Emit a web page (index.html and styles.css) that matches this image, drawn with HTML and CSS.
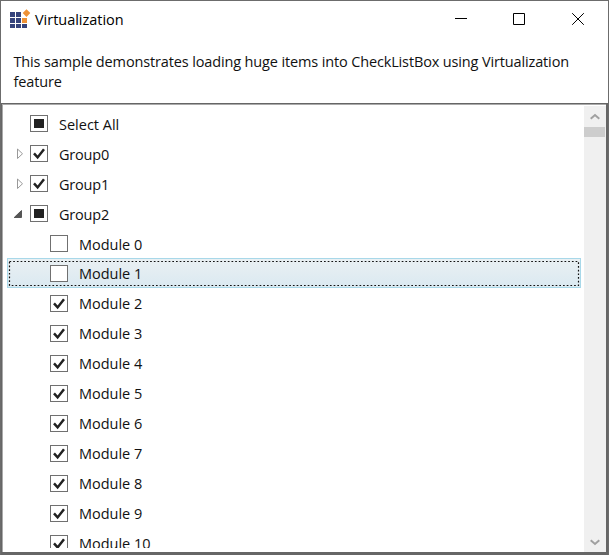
FILE: index.html
```
<!DOCTYPE html>
<html lang="en">
<head>
<meta charset="utf-8">
<title>Virtualization</title>
<link rel="stylesheet" href="styles.css">
</head>
<body>
<div class="window">
  <header class="titlebar">
    <svg class="logo" width="21" height="20" viewBox="0 0 21 20"><path fill="#35437c" d="M0 2h5v5H0zM6 2h5v5H6zM0 8h5v5H0zM6 8h5v5H6zM0 14h5v4H0zM6 14h5v4H6zM12 14h5v4h-5z"/><path fill="#ef9236" d="M12 8h5v5h-5zM16.5-.7l3.8 3.8-3.8 3.8-3.8-3.8z"/></svg>
    <span class="title">Virtualization</span>
    <div class="controls">
      <svg width="12" height="12" viewBox="0 0 12 12"><path d="M0 5.5h12"/></svg>
      <svg width="12" height="12" viewBox="0 0 12 12"><path d="M.5.5h11v11H.5z"/></svg>
      <svg width="12" height="12" viewBox="0 0 12 12"><path d="M.2.2l11.6 11.6M11.8.2L.2 11.8"/></svg>
    </div>
  </header>
  <p class="intro">This sample demonstrates loading huge items into CheckListBox using Virtualization<br>feature</p>
  <main class="list">
    <div class="rows" id="rows"></div>
    <div class="scrollbar">
      <svg width="10" height="7" viewBox="0 0 10 7"><path d="M.7 5.7L5 2l4.3 3.7"/></svg>
      <div class="track"><div class="thumb"></div></div>
      <svg width="10" height="7" viewBox="0 0 10 7"><path d="M.7 1.3L5 5l4.3-3.7"/></svg>
    </div>
  </main>
</div>
<script src="script.js"></script>
</body>
</html>
```
FILE: styles.css
```
* { box-sizing: border-box; }
body { margin: 0; background: #fff; color: #111; font-family: "Open Sans", "Noto Sans", sans-serif; font-size: 14.5px; }
.window { width: 609px; height: 555px; border: 1px solid #6c6c6c; border-bottom: 0; display: flex; flex-direction: column; overflow: hidden; }
.titlebar { height: 36px; flex: none; display: flex; align-items: center; padding-left: 9px; }
.logo { margin-top: 1px; overflow: visible; }
.title { margin: 2px 0 0 4px; letter-spacing: -.02px; line-height: 20px; color: #000; }
.controls { margin: 0 24px 0 auto; display: flex; gap: 46px; }
.controls svg { fill: none; stroke: #000; stroke-width: 1; }
.controls svg:last-child { margin-left: 1px; }
.intro { margin: 0; height: 66px; flex: none; padding: 15px 0 0 12.5px; line-height: 20px; white-space: nowrap; letter-spacing: -.14px; }
.list { flex: 1; display: flex; margin: 0 -1px; border: solid #666; border-width: 1px 3px 3px 2px; box-shadow: inset 1px 1px #aaa; padding: 2px 0 0 1px; min-height: 0; }
.rows { flex: 1; height: 442px; overflow: hidden; padding: 2px 0 0 4px; }
.row { position: relative; height: 30px; width: 574px; display: flex; align-items: center; padding-left: 6px; }
.row.child { padding-left: 43px; }
.label { margin: 3px 0 0 11px; line-height: 20px; letter-spacing: -.2px; white-space: nowrap; }
.row:first-child .label { letter-spacing: 0; }
.child .label { margin-top: 1px; letter-spacing: -.03px; }
.row:nth-child(5) .label { margin-top: 3px; }
.arrow { width: 10px; height: 12px; margin: 2px 7px 0 0; flex: none; }
.box { width: 18px; height: 17px; border: 1px solid #707070; background: #fff; flex: none; display: flex; align-items: center; justify-content: center; }
.solid { width: 10px; height: 9px; background: #212121; }
.box svg { fill: none; stroke: #212121; stroke-width: 2.5; }
.selected { background: linear-gradient(#eaf0f3, #dae9f1); box-shadow: inset 0 0 0 1px #a8d8e9; }
.selected .focus { position: absolute; left: 0; top: 0; fill: none; stroke: #111; stroke-width: 1.2; stroke-dasharray: 1.7 2; }
.scrollbar { width: 22px; height: 446px; background: #f0f0f0; display: flex; flex-direction: column; align-items: center; padding: 7px 0 6px; }
.scrollbar svg { fill: none; stroke: #a0a0a0; stroke-width: 2; flex: none; }
.track { flex: 1; width: 100%; padding-top: 7px; }
.thumb { height: 10px; margin-right: 1px; background: #cdcdcd; }
```
FILE: script.js
```
const check = '<svg width="14" height="13" viewBox="0 0 14 13"><path d="M2 6.4l3.6 4L12 2.2"/></svg>';
const solid = '<span class="solid"></span>';
const closed = '<path d="M4.5 1v9.5l5-4.75z" fill="#fff" stroke="#999"/>';
const open = '<path d="M8.5 2.5v7H1.2z" fill="#555" stroke="#333" stroke-width=".7"/>';
const focus = '<svg class="focus" width="574" height="30"><rect x="2.5" y="3.5" width="569" height="24"/></svg>';
const items = [
  ['Select All', solid, ''],
  ['Group0', check, closed],
  ['Group1', check, closed],
  ['Group2', solid, open]
];
for (let i = 0; i <= 10; i++) items.push(['Module ' + i, i < 2 ? '' : check, null]);
document.getElementById('rows').innerHTML = items.map(([name, mark, arrow]) => {
  const selected = name === 'Module 1';
  const kind = (arrow === null ? ' child' : '') + (selected ? ' selected' : '');
  const expander = arrow === null ? '' : `<svg class="arrow" viewBox="0 0 10 12">${arrow}</svg>`;
  return `<div class="row${kind}">${selected ? focus : ''}${expander}<span class="box">${mark}</span><span class="label">${name}</span></div>`;
}).join('');
```
